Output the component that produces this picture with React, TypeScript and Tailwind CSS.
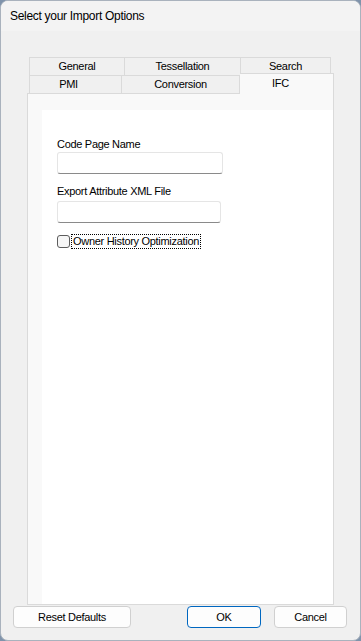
export default function App() {
  const font = "font-['Liberation_Sans',Arial,sans-serif] text-[11px] tracking-[-0.3px] text-black";

  return (
    <div className={`w-[361px] h-[641px] bg-[#7f93ab] ${font}`}>
      <div className="w-full h-full flex flex-col rounded-[8px] border border-[#a9b2bd] bg-[#f0f0f0] overflow-hidden">
        {/* title bar */}
        <div className="h-[30px] flex items-center pl-[9px] bg-[#f3f3f3] text-[12px]">
          Select your Import Options
        </div>

        <div className="flex-1 flex flex-col pt-[26px] pl-[26px] pr-[26px]">
          {/* tabs */}
          <div className="w-[307px]">
            <div className="flex h-[18px] pl-[2px]">
              <div className="w-[96px] flex items-center justify-center border border-b-0 border-[#dadada]">General</div>
              <div className="w-[116px] flex items-center justify-center border border-b-0 border-l-0 border-[#dadada]">Tessellation</div>
              <div className="w-[90px] flex items-center justify-center border border-b-0 border-l-0 border-[#dadada]">Search</div>
            </div>
            <div className="flex h-[18px] items-end pl-[2px]">
              <div className="w-[93px] h-[18px] flex items-center justify-center pr-[14px] border border-b-0 border-[#dadada]">PMI</div>
              <div className="w-[118px] h-[18px] flex items-center justify-center border border-b-0 border-l-0 border-[#dadada]">Conversion</div>
              <div className="w-[94px] h-[21px] -mb-px flex justify-center pt-[1px] pr-[12px] border border-b-0 border-l-0 border-[#dadada] bg-[#f9f9f9] relative z-10">IFC</div>
            </div>
          </div>

          {/* tab panel */}
          <div className="w-[307px] h-[512px] border border-[#dadada] bg-[#f9f9f9] pl-[14px] pt-[16px] flex">
            <div className="flex-1 bg-white pl-[15px] pt-[27px] flex flex-col">
              <div className="leading-[14px]">Code Page Name</div>
              <div className="mt-[1px] w-[166px] h-[22px] bg-white border border-[#e5e5e5] border-b-[#8a8a8a] rounded-[3px]" />
              <div className="mt-[10px] leading-[14px]">Export Attribute XML File</div>
              <div className="mt-[3px] w-[164px] h-[22px] bg-white border border-[#e5e5e5] border-b-[#8a8a8a] rounded-[3px]" />
              <div className="mt-[11px] flex items-center">
                <div className="w-[13px] h-[13px] rounded-[3px] border border-[#5c5c5c] bg-[#f6f6f6]" />
                <div className="ml-[1px] px-[1px] leading-[13px] border border-dotted border-black">Owner History Optimization</div>
              </div>
            </div>
          </div>

          {/* buttons */}
          <div className="flex items-center mt-[1px] -ml-[14px] -mr-[13px]">
            <div className="w-[118px] h-[22px] flex items-center justify-center rounded-[4px] border border-[#d0d0d0] bg-[#fdfdfd]">Reset Defaults</div>
            <div className="flex-1" />
            <div className="w-[74px] h-[22px] flex items-center justify-center rounded-[4px] border border-[#0067c0] bg-[#fdfdfd]">OK</div>
            <div className="w-[73px] h-[22px] ml-[13px] flex items-center justify-center rounded-[4px] border border-[#d0d0d0] bg-[#fdfdfd]">Cancel</div>
          </div>
        </div>
      </div>
    </div>
  );
}
